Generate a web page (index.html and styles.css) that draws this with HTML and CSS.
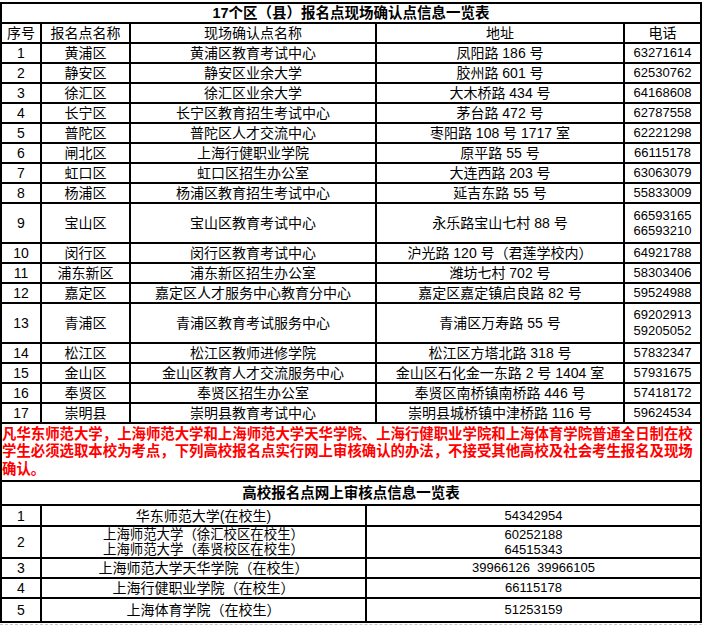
FILE: index.html
```html
<!DOCTYPE html>
<html lang="zh-CN">
<head>
<meta charset="utf-8">
<title>17个区（县）报名点现场确认点信息一览表</title>
<link rel="stylesheet" href="styles.css">
</head>
<body>
<table class="tbl t1">
  <colgroup>
    <col class="c-no"><col class="c-area"><col class="c-site"><col class="c-addr"><col class="c-tel">
  </colgroup>
  <tr class="r20"><td colspan="5" class="title">17个区（县）报名点现场确认点信息一览表</td></tr>
  <tr class="r20"><td>序号</td><td>报名点名称</td><td>现场确认点名称</td><td>地址</td><td>电话</td></tr>
  <tr class="r20"><td>1</td><td>黄浦区</td><td>黄浦区教育考试中心</td><td>凤阳路 186 号</td><td class="tel">63271614</td></tr>
  <tr class="r20"><td>2</td><td>静安区</td><td>静安区业余大学</td><td>胶州路 601 号</td><td class="tel">62530762</td></tr>
  <tr class="r20"><td>3</td><td>徐汇区</td><td>徐汇区业余大学</td><td>大木桥路 434 号</td><td class="tel">64168608</td></tr>
  <tr class="r20"><td>4</td><td>长宁区</td><td>长宁区教育招生考试中心</td><td>茅台路 472 号</td><td class="tel">62787558</td></tr>
  <tr class="r20"><td>5</td><td>普陀区</td><td>普陀区人才交流中心</td><td>枣阳路 108 号 1717 室</td><td class="tel">62221298</td></tr>
  <tr class="r20"><td>6</td><td>闸北区</td><td>上海行健职业学院</td><td>原平路 55 号</td><td class="tel">66115178</td></tr>
  <tr class="r20"><td>7</td><td>虹口区</td><td>虹口区招生办公室</td><td>大连西路 203 号</td><td class="tel">63063079</td></tr>
  <tr class="r20"><td>8</td><td>杨浦区</td><td>杨浦区教育招生考试中心</td><td>延吉东路 55 号</td><td class="tel">55833009</td></tr>
  <tr class="r40"><td>9</td><td>宝山区</td><td>宝山区教育考试中心</td><td>永乐路宝山七村 88 号</td><td class="tel lh15">66593165<br>66593210</td></tr>
  <tr class="r20"><td>10</td><td>闵行区</td><td>闵行区教育考试中心</td><td>沪光路 120 号（君莲学校内）</td><td class="tel">64921788</td></tr>
  <tr class="r20"><td>11</td><td>浦东新区</td><td>浦东新区招生办公室</td><td>潍坊七村 702 号</td><td class="tel">58303406</td></tr>
  <tr class="r20"><td>12</td><td>嘉定区</td><td>嘉定区人才服务中心教育分中心</td><td>嘉定区嘉定镇启良路 82 号</td><td class="tel">59524988</td></tr>
  <tr class="r40"><td>13</td><td>青浦区</td><td>青浦区教育考试服务中心</td><td>青浦区万寿路 55 号</td><td class="tel lh16">69202913<br>59205052</td></tr>
  <tr class="r20"><td>14</td><td>松江区</td><td>松江区教师进修学院</td><td>松江区方塔北路 318 号</td><td class="tel">57832347</td></tr>
  <tr class="r20"><td>15</td><td>金山区</td><td>金山区教育人才交流服务中心</td><td>金山区石化金一东路 2 号 1404 室</td><td class="tel">57931675</td></tr>
  <tr class="r20"><td>16</td><td>奉贤区</td><td>奉贤区招生办公室</td><td>奉贤区南桥镇南桥路 446 号</td><td class="tel">57418172</td></tr>
  <tr class="r20"><td>17</td><td>崇明县</td><td>崇明县教育考试中心</td><td>崇明县城桥镇中津桥路 116 号</td><td class="tel">59624534</td></tr>
  <tr class="r58">
    <td colspan="5" class="note">
      <div class="note-line">凡华东师范大学，上海师范大学和上海师范大学天华学院、上海行健职业学院和上海体育学院普通全日制在校</div>
      <div class="note-line">学生必须选取本校为考点，下列高校报名点实行网上审核确认的办法，不接受其他高校及社会考生报名及现场</div>
      <div class="note-line note-last">确认。</div>
    </td>
  </tr>
  <tr class="r24"><td colspan="5" class="title">高校报名点网上审核点信息一览表</td></tr>
</table>
<table class="tbl t2">
  <colgroup>
    <col class="c2-no"><col class="c2-name"><col class="c2-tel">
  </colgroup>
  <tr class="r21"><td>1</td><td>华东师范大学(在校生)</td><td class="tel">54342954</td></tr>
  <tr class="r32"><td>2</td><td class="lh-tight">上海师范大学（徐汇校区在校生）<br>上海师范大学（奉贤校区在校生）</td><td class="tel lh15">60252188<br>64515343</td></tr>
  <tr class="r20"><td>3</td><td>上海师范大学天华学院（在校生）</td><td class="tel">39966126&nbsp;&nbsp;39966105</td></tr>
  <tr class="r20"><td>4</td><td>上海行健职业学院（在校生）</td><td class="tel">66115178</td></tr>
  <tr class="r24"><td>5</td><td>上海体育学院（在校生）</td><td class="tel">51253159</td></tr>
</table>
<div class="cutline"></div>
</body>
</html>
```
FILE: styles.css
```css
* { box-sizing: border-box; }
html, body { margin: 0; padding: 0; background: #fff; }
body {
  padding-top: 2px;
  font-family: "Liberation Sans", "Noto Sans CJK SC", sans-serif;
  font-size: 14px;
  color: #000;
}
.tbl {
  border-collapse: separate;
  border-spacing: 0;
  table-layout: fixed;
  width: 702px;
  border-left: 2px solid #000;
}
.t1 { border-top: 2px solid #000; }
.tbl td {
  border-right: 2px solid #000;
  border-bottom: 2px solid #000;
  padding: 0;
  text-align: center;
  vertical-align: middle;
  line-height: 18px;
  white-space: nowrap;
}
.c-no { width: 40px; }
.c-area { width: 89px; }
.c-site { width: 246px; }
.c-addr { width: 248px; }
.c-tel { width: 77px; }
.c2-no { width: 40px; }
.c2-name { width: 325px; }
.c2-tel { width: 335px; }
.r20 { height: 20px; }
.r21 { height: 21px; }
.r24 { height: 24px; }
.r32 { height: 32px; }
.r40 { height: 40px; }
.r58 { height: 58px; }
.tbl td.tel { font-size: 13px; }
.tbl td.lh15 { line-height: 15px; }
.tbl td.lh16 { line-height: 16px; }
.tbl td.lh-tight { line-height: 15px; font-size: 13.4px; }
.tbl td.title {
  font-weight: bold;
  font-size: 14.5px;
}
.tbl td.note {
  text-align: left;
  vertical-align: top;
  padding-top: 2px;
  color: #f00;
  font-weight: bold;
  font-size: 14.4px;
}
.note-line { line-height: 16.5px; }
.note-last { margin-top: 2px; }
.cutline {
  width: 702px;
  margin-top: 1px;
  border-top: 1px dashed #c8c8c8;
}
```
